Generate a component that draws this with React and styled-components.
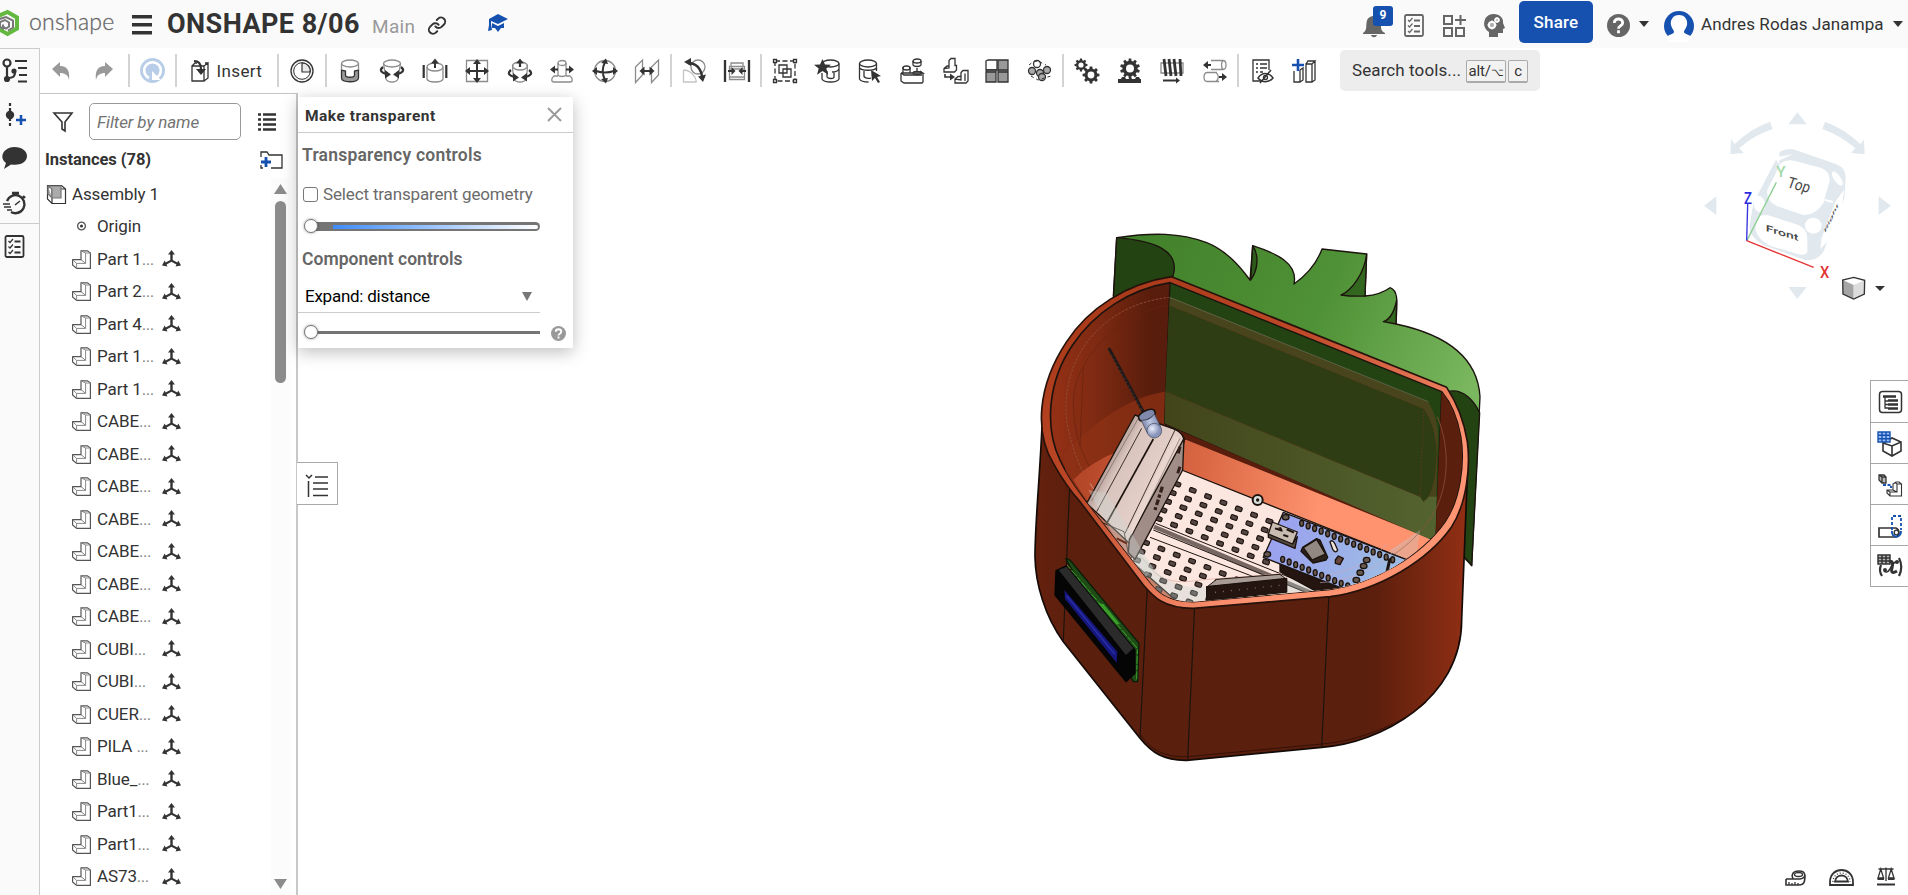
import React from 'react';
import styled, { createGlobalStyle } from 'styled-components';

const INK = '#333';
const BLUE = '#1651b0';

const Global = createGlobalStyle`
  * { box-sizing: border-box; }
  body { margin: 0; background: #fff; color: ${INK}; font: 17px/1 Roboto, "Liberation Sans", sans-serif; overflow: hidden; }
  svg { display: block; flex: none; overflow: visible; }
`;

const Page = styled.div`display: flex; flex-direction: column; width: 1908px; height: 895px;`;
const Header = styled.header`
  display: flex; align-items: center; height: 48px; flex: none; background: #fafafa; overflow: hidden;
`;
const Brand = styled.span`
  width: 103px; margin-left: 9px; padding-bottom: 5px; color: #666;
  font: 300 23px/1 Lato, sans-serif; letter-spacing: 0.25px; -webkit-text-stroke: 0.3px #666;
`;
const DocTitle = styled.h1`
  width: 205px; margin: 0 0 0 15px; white-space: nowrap; font-size: 27px; line-height: 1; font-weight: 700; letter-spacing: 0.45px;
`;
const Branch = styled.span`width: 56px; padding-top: 5px; color: #999; font-size: 19px; letter-spacing: 0.3px;`;
const LearnIcon = styled.div`margin: 0 0 3px 42px;`;
const Spacer = styled.div`flex: 1;`;
const Badge = styled.span`
  position: absolute; left: 10px; top: -9px; width: 20px; height: 20px; border-radius: 3px; background: ${BLUE};
  color: #fff; font-size: 12px; font-weight: 700; line-height: 19px; text-align: center;
`;
const Bell = styled.div`position: relative; width: 22px; height: 22px; margin-top: 4px; margin-right: 19px;`;
const HeadIcon = styled.div`width: ${p => p.$w}px; margin-right: ${p => p.$gap}px; margin-top: 3px;`;
const Share = styled.button`
  width: 74px; height: 42px; margin: 0 14px 4px 0; border: 0; border-radius: 5px; background: ${BLUE}; color: #fff;
  font: 500 17px/1 Roboto, sans-serif; letter-spacing: 0.2px; padding: 0;
`;
const UserName = styled.span`width: 192px; margin-left: 7px; white-space: nowrap; font-size: 17px; letter-spacing: 0.1px;`;
const Caret = styled.span`
  width: 0; height: 0; border: 5px solid transparent; border-top: 6px solid ${p => p.$c || INK}; border-bottom: 0;
  margin-right: ${p => p.$gap || 0}px;
`;

const Body = styled.div`display: flex; flex: 1; min-height: 0;`;
const Rail = styled.nav`
  display: flex; flex-direction: column; width: 40px; flex: none; background: #fafafa;
  border-top: 1px solid #ccc; border-right: 1px solid #ccc;
`;
const RailItem = styled.div`height: ${p => p.$h}px; padding: ${p => p.$pad}; ${p => p.$rule && 'border-bottom: 1px solid #ccc;'}`;
const Main = styled.main`display: flex; flex-direction: column; flex: 1; min-width: 0;`;
const Toolbar = styled.div`display: flex; align-items: center; height: 45px; flex: none;`;
const Tool = styled.div`display: flex; align-items: center; justify-content: center; width: ${p => p.$w || 42.5}px; height: 45px;`;
const Sep = styled.div`width: 2px; height: 33px; margin: 0 1.5px; background: #d3d3d3; flex: none;`;
const InsertTool = styled.div`display: flex; align-items: center; gap: 7px; width: 96.5px; padding: 1px 0 0 12px; font-size: 17px; letter-spacing: 0.35px;`;
const Search = styled.div`
  display: flex; align-items: center; width: 200px; height: 41px; margin: 0 0 0 15px; padding-left: 12px;
  background: #ededed; border-radius: 5px; white-space: nowrap; letter-spacing: 0.1px;
`;
const Key = styled.kbd`
  height: 23px; width: ${p => p.$w}px; margin: 2px 0 0 ${p => p.$ml || 2}px; border: 1px solid #aaa; border-bottom-width: 2px; border-radius: 2px;
  background: #f2f2f2; text-align: center; font: 15px/20px Roboto, "Liberation Sans", sans-serif; letter-spacing: -0.2px;
`;
const OptionGlyph = styled.span`font-size: 11px;`;

const Work = styled.div`display: flex; flex: 1; min-height: 0;`;
const Sidebar = styled.aside`
  width: 258px; flex: none; display: flex; flex-direction: column; border-top: 1px solid #c4c4c4; border-right: 2px solid #c8c8c8;
`;
const FilterRow = styled.div`display: flex; align-items: center; height: 37px; margin-top: 9px; padding-left: 13px;`;
const FilterBox = styled.div`
  width: 152px; height: 37px; margin: 0 17px 0 16px; padding: 0 7px; border: 1px solid #999; border-radius: 5px;
  color: #737373; font: italic 17px/36px Roboto, sans-serif; letter-spacing: -0.1px;
`;
const InstanceRow = styled.div`
  display: flex; align-items: center; justify-content: space-between; height: 38px; padding: 2px 13px 0 5px; font-weight: 700; font-size: 16.5px; letter-spacing: -0.05px;
`;
const TreeArea = styled.div`display: flex; justify-content: space-between; flex: 1; min-height: 0; padding-right: 6px;`;
const Tree = styled.div`flex: 1;`;
const Row = styled.div`
  display: flex; align-items: center; height: 32.5px; padding-left: ${p => p.$in}px; white-space: nowrap; letter-spacing: -0.12px;
`;
const RowName = styled.span`width: ${p => p.$w || 65}px; margin-left: ${p => p.$ml}px;`;
const Dots = styled.span`color: #888; letter-spacing: -0.5px;`;
const ScrollTrack = styled.div`display: flex; flex-direction: column; align-items: center; width: 19px; padding: 6px 0; background: #fcfcfc;`;
const Thumb = styled.div`width: 11px; height: 182px; margin: 7px 0 auto; border-radius: 6px; background: #8b8b8b;`;

const Viewport = styled.section`position: relative; flex: 1;`;
const Float = styled.div`position: absolute; left: ${p => p.$x}px; top: ${p => p.$y}px;`;
const Panel = styled.div`
  position: absolute; left: 0; top: 4px; width: 275px; height: 251px; background: #fff;
  box-shadow: 0 4px 16px rgba(0,0,0,.26);
`;
const PanelHead = styled.div`
  display: flex; align-items: center; justify-content: space-between; height: 36px; padding: 0 12px 0 7px;
  border-bottom: 1px solid #ccc; font-size: 15.5px; font-weight: 700; letter-spacing: 0.5px;
`;
const PanelName = styled.span`padding-top: 5px;`;
const PanelTitle = styled.div`
  height: 22px; padding-left: 4px; margin-top: ${p => p.$mt}px; color: #666; font-weight: 600; font-size: 17.5px; line-height: 22px; letter-spacing: ${p => p.$ls}px;
`;
const CheckRow = styled.label`
  display: flex; align-items: center; height: 22px; margin-top: 17px; padding-left: 5px; gap: 5px; color: #6b6b6b; font-size: 17px; letter-spacing: -0.15px;
`;
const Box = styled.i`width: 15px; height: 15px; border: 1px solid #777; border-radius: 3px;`;
const Slider = styled.div`display: flex; align-items: center; height: 14px; width: 237px; margin: ${p => p.$mt}px 0 0 5px;`;
const Knob = styled.i`
  width: 14px; height: 14px; flex: none; border: 1px solid #777; border-radius: 50%; background: #fff; box-shadow: 0 0 3px rgba(0,0,0,.4);
  margin-left: 1px; z-index: 1;
`;
const FadeTrack = styled.i`
  flex: 1; margin-left: -3px; height: 9px; background: #757575; border-radius: 0 5px 5px 0; display: flex; padding: 3px 2px 2px 18px;
`;
const Fade = styled.i`flex: 1; border-radius: 0 3px 3px 0; background: linear-gradient(90deg, #3f8cf8, #fff);`;
const ThinTrack = styled.i`flex: 1; height: 3px; background: #757575;`;
const Select = styled.div`
  display: flex; align-items: center; justify-content: space-between; width: 242px; height: 33px; margin-top: 10px; padding: 3px 8px 2px 7px;
  border-bottom: 1px solid #ccc; color: #000; letter-spacing: -0.25px;
`;
const HelpRow = styled.div`display: flex; align-items: flex-start; gap: 11px;`;
const Help = styled.span`margin-top: 13px;`;
const FlyTab = styled.div`
  position: absolute; left: -1px; top: 369px; width: 41px; height: 43px; padding: 11px 8px; border: 1px solid #aaa; border-left: 0; background: #fff;
`;
const SideTabs = styled.div`
  position: absolute; right: 0; top: 287px; width: 38px; border: 1px solid #a6a6a6; border-right: 0; background: #fff;
`;
const SideTab = styled.div`height: 41px; padding: 8px 0 0 7px; & + & { border-top: 1px solid #a6a6a6; }`;
const BottomTools = styled.div`position: absolute; right: 13px; bottom: 9px; display: flex; align-items: flex-end; gap: 23px;`;

const Svg = ({ s = 24, w, h, vb, children, ...r }) => (
  <svg width={w || s} height={h || s} viewBox={vb || `0 0 ${w || s} ${h || s}`} fill="none" stroke={INK} strokeWidth="1.3" {...r}>{children}</svg>
);
const G = '#8c8c8c';
const F = { fill: INK, stroke: 'none' };

const gear = (cx, cy, r, n = 8) => {
  const pts = [];
  for (let i = 0; i < n; i++) {
    [[-0.32, 0.76], [-0.2, 1], [0.2, 1], [0.32, 0.76]].forEach(([o, k]) => {
      const a = ((i + o) * 2 * Math.PI) / n;
      pts.push(`${(cx + Math.sin(a) * r * k).toFixed(2)} ${(cy - Math.cos(a) * r * k).toFixed(2)}`);
    });
  }
  const q = r * 0.4;
  return `M${pts.join('L')}ZM${cx - q} ${cy}a${q} ${q} 0 1 0 ${2 * q} 0a${q} ${q} 0 1 0 ${-2 * q} 0Z`;
};
const Gear = p => <path {...F} fillRule="evenodd" d={gear(p.x, p.y, p.r, p.n)} />;

const MateIcons = {
  fastened: <><path fill="#999" stroke={INK} d="M3.5 11v8c0 5 17 5 17 0v-8l-4 1v4c0 3-9 3-9 0v-4z" /><path stroke={G} d="M3.5 4.500v6.500M20.500 4.500v6.500" /><ellipse stroke={G} cx="12" cy="4.500" rx="8.500" ry="3.500" /></>,
  revolute: <><path stroke={G} d="M3.500 4.500 6 20c2 4 10 4 12 0l2.500-15.500" /><ellipse stroke={G} cx="12" cy="4.500" rx="8.500" ry="3.500" /><path strokeWidth="2.200" d="M3 8c-4 3-2 6 4 7M21 8c4 3 2 6-4 7" /><path {...F} d="m11 15.500-6 4V11zM13 15.500l6 4V11z" /></>,
  slider: <><path stroke={G} d="M4 8v12c1 4 15 4 16 0V8" /><ellipse stroke={G} cx="12" cy="8" rx="8" ry="4" /><path strokeWidth="2.200" d="M.7 6v13M23.300 6v13" /><path strokeWidth="2" d="M12 9V4" /><path {...F} d="M12-.5 8 4.500h8z" /></>,
  planar: <><path stroke={G} d="M1.500 1.500h21v21h-21z" /><path strokeWidth="2" d="M12 4v16M4 12h16" /><path {...F} d="m12 0-4 5h8zM12 24l-4-5h8zM0 12l5-4v8zM24 12l-5-4v8z" /></>,
  cylindrical: <><path stroke={G} d="M5 6C4 10 5 15 6 20c2 4 10 4 12 0 1-5 2-10 1-14" /><ellipse stroke={G} cx="12" cy="7" rx="7.500" ry="4" /><path strokeWidth="2.200" d="M3 11c-4 3-2 6 4 7M21 11c4 3 2 6-4 7M12 8V4" /><path {...F} d="m11 18.500-6 4V14zM13 18.500l6 4V14zM12-.5 8 4.500h8z" /></>,
  pinslot: <><ellipse stroke={G} cx="12" cy="4" rx="4" ry="2.500" /><path stroke={G} d="M8 4v12c1 2 7 2 8 0V4M8 17H4c-3 2-3 6 0 6h16c3 0 3-4 0-6h-4" /><path strokeWidth="2" d="M3 10.500h5M16 10.500h5" /><path {...F} d="m0 10.500 5-4v8zM24 10.500l-5-4v8z" /></>,
  ball: <><circle stroke={G} cx="12" cy="12" r="10.500" /><path strokeWidth="2" d="M12 3c-3 6-3 12 0 18M3 12c6 2 12 2 18 0" /><path {...F} d="m13-.5-5 4.500 7 1zM13 24.500l-5-4.500 7-1zM-1 12l5-4v8zM25 12l-5-4v8z" /></>,
  parallel: <><path stroke={G} d="M.5 23.500V8l7-7v15zM16.500 23.500V8l7-7v15z" /><path strokeWidth="2" d="M8 12h8" /><path {...F} d="m4.500 12 5-4.500v9zM19.500 12l-5-4.500v9z" /></>,
  tangent: <><path stroke={G} d="M.5 11v12h13M.5 11c7 0 12 6 13 12" opacity=".5" /><circle stroke={G} cx="15" cy="8" r="7" /><path strokeWidth="2.500" d="M5 4c4 0 7 1 10 4 3 4 4 7 4 10" /><path {...F} d="m1 3 7-4v8zM20 23l-5-5.500 8-2z" /></>,
  width: <><path strokeWidth="2.300" d="M0 1v22M24 1v22" /><path stroke={G} d="M4.500 7.500h15v13h-15zM5 10h14M6 7V4h12v3M5 18h14" /><path strokeWidth="2" d="M3 12h5M21 12h-5" /><path {...F} d="m10.500 12-4-4v8zM13.500 12l4-4v8z" /></>,
};
const ToolIcons = {
  group: <><path strokeDasharray="5 2.500" d="M2 2h20v20H2z" /><path fill="#fff" d="M.5.5h3v3h-3zM20.500.5h3v3h-3zM.5 20.500h3v3h-3zM20.500 20.500h3v3h-3zM10 10h8v8h-8zM6 6h8v8H6z" /></>,
  favmate: <><ellipse cx="15.500" cy="4.500" rx="8.500" ry="3.500" /><path d="M24 4.500V20c-2 4-15 4-17 0v-6M24 10c-1 2-4 3-7 3M12 12v6c1 2 7 2 7 0v-5" /><path {...F} d="m7.500 0 2.500 5.500 6 .2-4.700 3.800 2 6.200L7.500 12 2 15.700l1.700-6.200L-1 5.700l6-.2z" /></>,
  pick: <><ellipse cx="10" cy="4.500" rx="8.500" ry="3.500" /><path d="M1.500 4.500V20c1 2 4 3 9 3M18.500 4.500V12M2 9c1 3 15 3 16 0M6 12v5c0 2 5 3 7 2" /><path {...F} d="m13 11 10 6-4 1 3 5-2 1-3-5-3 3z" /></>,
  replicate: <><path d="M1 14h22l-3-2M1 14v8l3 2h18l1-1v-9M1 14l3 2h18M3 8v6M10 8v6" /><ellipse cx="6.500" cy="9" rx="3.500" ry="2" /><ellipse cx="17" cy="2" rx="4" ry="2" /><path d="M13 2v4c1 2 7 2 8 0V2M17 9v4" /><ellipse cx="17" cy="14" rx="4" ry="1.500" /></>,
  pattern: <><path d="M6 1.500 8-.5h4v7l1.500 0V11l-2 2H1V9.500L4 7h2zM6 1.500V9L1 9.500M18 13.500l2-2h5V22l-2 2H12v-4l3-2.500h3zM18 13.500V21l-6-1M22 14.500V22" /><path d="M2 15v3h5" strokeWidth="1.600" /><path {...F} d="m12 18-5-3.500v7z" /></>,
  linear: <><path fill="#fff" d="m1 2 2-1h9v10H1z" /><path fill="#999" d="M13 1h10v10H13zM1 13h10v10H1zM13 13h10v10H13zM1 13l1-2h9v2M13 13v-2h10v2" /></>,
  circular: <g fill="#aaa"><circle fill="#fff" cx="9" cy="5" r="3.500" /><circle cx="4" cy="12" r="3.500" /><circle cx="12" cy="14" r="3.500" /><circle cx="19" cy="11" r="3.500" /><circle cx="14" cy="18" r="3.500" /><path fill="none" strokeWidth="1" strokeDasharray="3 3" d="M1 6l5-4 6 1 6 3M3 17l7 4 13-4" /></g>,
  gears: <><Gear x={6} y={6} r={6.500} /><Gear x={16} y={16} r={8.500} /></>,
  rack: <><Gear x={12} y={9.500} r={10} n={10} /><path {...F} d="M0 24v-4h3l1-2h3l1 2h3l1-3 2 3h3l1-2h3l1 2h1v4z" /></>,
  screw: <><path stroke={G} d="M1 4h22v10H1z" /><path strokeWidth="2.800" d="M4 0l2 17M9 0l2 17M14 0l2 17M20 0l1 17" /><path strokeWidth="2" d="M3 21.500h14" /><path {...F} d="m20 21.500-4-3v6z" /></>,
  linrel: <><path stroke={G} d="M8 1.500h12c4 0 4 9 0 9H8M20 1.500c-2 2-2 7 0 9M14 13.500H4c-4 0-4 9 0 9h12M13 13.500c3 2 3 7 0 9" /><path strokeWidth="2" d="M4 6h4M16 18h5" /><path {...F} d="m0 6 5-4v8zM24 18l-5-4v8z" /></>,
};

const PartIcon = () => (
  <Svg w={19} h={19} strokeWidth="1.200" stroke="#555">
    <path d="M.6 9.600H9V.8h6.400L18.400 3v15.400H4.600L.6 15z" />
    <path stroke="#888" strokeWidth="1" d="M4.600 18.400v-5L.6 9.600M4.600 13.400h9V3h4.800M13.600 3 9 .8M13.600 13.400 9 9.600" />
  </Svg>
);
const MateMark = () => (
  <Svg w={19} h={18} stroke="none" fill={INK}><path d="M8.300 10V4.500H6L9.500 0 13 4.500h-2.300V10l4.600 2.600 1-2L19 15.500l-5.500 1 1-2-5-2.700-5 2.700 1 2-5.500-1 2.700-4.900 1 2z" /></Svg>
);
const Checklist = ({ c = INK, w = 20, h = 23 }) => (
  <Svg w={w} h={h} vb="0 0 20 23" stroke={c} strokeWidth="1.800"><rect x="1" y="1" width="18" height="21" rx="1.500" /><path strokeWidth="2" d="M10 6.500h6M10 12h6M10 17.500h6" /><path strokeWidth="1.200" d="m4 6 1.500 1.500L8.500 4M4 11.500 5.500 13l3-3.500M4 17l1.500 1.500 3-3.500" /></Svg>
);
const Question = ({ w, h, c }) => (
  <Svg w={w} h={h} vb="0 0 22 22"><circle cx="11" cy="11" r="11" fill={c} stroke="none" /><path stroke="#fff" strokeWidth="2.700" d="M7 8.500c0-5 8-5 8 0 0 3-4 2.500-4 5.500M11 15.500v3" /></Svg>
);

const at = (pts, dx, dy) => pts.map(([x, y]) => `${x + dx},${y + dy}`).join(' ');
const holes = () => {
  const out = [];
  for (let r = 0; r < 5; r++) for (let c = 0; c < (r === 4 ? 8 : 7); c++) out.push([472 + c * 46 - r * 14, 793 + c * 18.500 + r * 26]);
  for (let r = 0; r < 6; r++) for (let c = -1; c < 6; c++) out.push([424 + c * 46 - r * 13.500 + (r > 2 ? 46 : 0), 987 + c * 18.500 + r * 26 + (r > 2 ? 18 : 0)]);
  return out;
};
const INNER = 'M450 188C330 208 225 275 158 375C85 480 72 620 120 720C145 775 175 812 200 845L385 1080C410 1112 440 1145 520 1145L930 1108C1060 1090 1200 1010 1275 905C1320 840 1335 730 1322 650C1312 590 1290 545 1265 515Z';

const Model = () => (
  <svg width="480" height="567" viewBox="0 0 1440 1701" fill="none" stroke="#1c130e" strokeWidth="4" strokeLinejoin="round">
    <defs>
      <linearGradient id="leaf" x1="300" y1="60" x2="1350" y2="520" gradientUnits="userSpaceOnUse"><stop offset="0" stopColor="#41802a" /><stop offset=".55" stopColor="#4f9136" /><stop offset="1" stopColor="#7ab75e" /></linearGradient>
      <linearGradient id="rim" x1="300" y1="200" x2="900" y2="1000" gradientUnits="userSpaceOnUse"><stop offset="0" stopColor="#a93a19" /><stop offset=".45" stopColor="#c04a2a" /><stop offset="1" stopColor="#ff9473" /></linearGradient>
      <linearGradient id="shell" x1="50" y1="0" x2="1345" y2="0" gradientUnits="userSpaceOnUse"><stop offset="0" stopColor="#64210e" /><stop offset=".1" stopColor="#5b1f0d" /><stop offset=".78" stopColor="#5b1f0d" /><stop offset="1" stopColor="#922f14" /></linearGradient>
      <linearGradient id="wall" x1="80" y1="0" x2="450" y2="0" gradientUnits="userSpaceOnUse"><stop offset="0" stopColor="#963116" /><stop offset=".4" stopColor="#7e2a12" /><stop offset=".85" stopColor="#581d0c" /></linearGradient>
      <linearGradient id="floor" x1="200" y1="740" x2="900" y2="860" gradientUnits="userSpaceOnUse"><stop offset="0" stopColor="#b6482a" /><stop offset=".5" stopColor="#db6946" /><stop offset="1" stopColor="#ff936f" /></linearGradient>
      <linearGradient id="low" x1="440" y1="0" x2="1240" y2="0" gradientUnits="userSpaceOnUse"><stop offset="0" stopColor="#42451a" /><stop offset="1" stopColor="#536330" /></linearGradient>
      <linearGradient id="box" x1="280" y1="700" x2="430" y2="780" gradientUnits="userSpaceOnUse"><stop offset="0" stopColor="#b7a29b" /><stop offset=".2" stopColor="#d8c4bd" /><stop offset="1" stopColor="#e6d2cb" /></linearGradient>
      <linearGradient id="pcb" x1="740" y1="900" x2="1100" y2="1050" gradientUnits="userSpaceOnUse"><stop offset="0" stopColor="#9a9ff0" /><stop offset="1" stopColor="#9dbbe4" /></linearGradient>
      <linearGradient id="led" x1="356" y1="0" x2="400" y2="0" gradientUnits="userSpaceOnUse"><stop offset="0" stopColor="#7f89ab" /><stop offset=".5" stopColor="#bcc7e4" /><stop offset="1" stopColor="#8b96ba" /></linearGradient>
      <radialGradient id="dome" cx=".35" cy=".35"><stop offset="0" stopColor="#e9eefc" /><stop offset="1" stopColor="#8994ba" /></radialGradient>
      <clipPath id="inside"><path d={INNER} /></clipPath>
    </defs>
    <path fill="url(#leaf)" d="M290 53C400 37 480 38 560 68C620 92 660 140 690 180L698 77C770 100 835 130 822 192C870 158 892 125 906 87L1040 102L1035 228C1070 225 1095 214 1110 203C1135 212 1132 240 1128 312C1260 340 1372 400 1380 530L1355 1037L1320 1000L600 600L280 228Z" />
    <g fill="#234313">
      <path d="M290 53C400 62 485 90 458 172L280 240Z" />
      <path fill="#2d5b1a" d="M698 77C718 105 714 150 692 180Z" />
      <path fill="#33661f" d="M1040 102C1033 160 995 212 963 225C990 229 1015 229 1035 228Z" />
      <path fill="#33661f" d="M1130 240C1122 280 1105 300 1090 305L1128 312Z" />
      <path d="M1280 516C1330 500 1365 548 1379 578L1355 1037L1325 1000Z" />
    </g>
    <path fill="url(#shell)" stroke="#130b08" strokeWidth="5" d="M68 570C62 750 45 900 45 1010C46 1090 75 1190 130 1265L360 1555C395 1598 430 1622 500 1621L905 1582C1080 1570 1325 1440 1325 1200L1345 690L700 500Z" />
    <path stroke="#2b0f07" strokeWidth="2.500" d="M362 1545C395 1590 430 1612 505 1610L905 1572C1020 1562 1150 1510 1220 1445" />
    <path strokeWidth="3.500" d="M150 770L130 1262M383 1080L360 1555M524 1155L503 1618M927 1120L905 1582" />
    <path fill="url(#rim)" stroke="#25120b" strokeWidth="5" d="M455 170C320 190 205 265 140 365C50 500 45 640 100 730C125 775 150 812 180 845L370 1095C400 1130 430 1165 520 1165L930 1130C1080 1110 1225 1020 1295 920C1340 850 1352 740 1342 665C1330 590 1305 540 1280 502Z" />
    <path fill="url(#wall)" d={INNER} strokeWidth="5" />
    <g clipPath="url(#inside)">
      <path fill="#8e3216" stroke="none" opacity=".7" d="M130 700C230 600 330 530 434 515L434 760L150 860Z" />
      <path stroke="#96523b" strokeWidth="2.500" strokeDasharray="8 4" d="M450 232C260 250 120 400 140 600C160 740 240 850 300 940" />
      <path stroke="#6a2411" strokeWidth="2" d="M450 255C290 280 165 420 160 540C160 680 210 760 290 850" />
      <path stroke="#65220f" strokeWidth="2" d="M190 440L180 680" />
      <path fill="url(#floor)" stroke="none" d="M160 780C260 680 380 670 500 660L1240 960L1330 900L1200 1160L400 1150Z" />
      <path fill="#234313" d="M450 188L1265 515L1248 960L434 610Z" />
      <path fill="#48451c" stroke="none" d="M449 230L1225 545Q1252 590 1254 640L1245 960L434 610Z" />
      <path fill="url(#low)" stroke="none" d="M436 515L1200 830L1250 830L1246 950L1228 957L434 610Z" />
      <path fill="#2e3d14" stroke="none" d="M448 256L1212 566Q1262 640 1246 760Q1238 830 1210 845L1200 830L436 515Z" />
      <path stroke="#69705a" strokeWidth="2" d="M449 232L1225 545" />
      <path stroke="#70391f" strokeWidth="2" strokeDasharray="5 5" d="M436 515L1200 830M450 256L1212 566L1200 830M1212 566Q1262 640 1246 760Q1238 830 1210 845" />
      <path fill="#5a1f0d" stroke="none" d="M1265 515L1340 600L1330 870L1246 960Z" />
      <path stroke="#8b533e" strokeWidth="3" opacity=".8" d="M1252 590C1290 680 1290 800 1235 890C1190 960 1120 1010 1060 1040" />
      <polygon fill="#fce7e0" points={at([[245, 420], [940, 697], [750, 830], [260, 840], [90, 690]], 240, 330)} />
      <path stroke="#776762" strokeWidth="13" d="M402 920L905 1132" /><path strokeWidth="3" d="M407 910L915 1115M400 930L860 1118M390 952L740 1085" />
      <g fill="#574744" strokeWidth="3.500">{holes().map(([x, y], i) => <rect key={i} x={x - 10} y={y - 7} width="20" height="13" rx="4" transform={`rotate(20 ${x} ${y})`} />)}</g>
      <path stroke="#dcae9f" strokeWidth="3" opacity=".7" d="M210 790L320 960L380 1030C420 1090 480 1090 540 1080L950 1048C1040 1040 1120 990 1160 960" />
      <path fill="#b9d1d1" opacity=".3" stroke="none" d="M210 850L390 1030C430 1090 500 1110 560 1098L910 1070C1050 1050 1110 990 1200 930L1180 1080L900 1160L380 1150Z" />
      <polygon fill="#241510" points={at([[540, 702], [770, 795], [700, 812], [540, 725]], 240, 330)} />
      <polygon fill="url(#pcb)" points={at([[550, 547], [935, 695], [870, 740], [735, 778], [490, 682]], 240, 330)} />
      <path stroke="#c9a9c0" strokeWidth="2.500" opacity=".7" d="M890 1068C1000 1060 1070 1010 1100 972M900 1088C1020 1080 1090 1030 1130 984" />
      <g fill="#66594f" strokeWidth="4">
        {Array.from({ length: 15 }, (_, i) => <ellipse key={i} cx={845 + i * 19.500} cy={910 + i * 7.800} rx="6" ry="9" />)}
        {Array.from({ length: 11 }, (_, i) => <ellipse key={i} cx={788 + i * 19.500} cy={1018 + i * 8} rx="6" ry="9" />)}
        {[[1040, 1020], [1031, 1038], [1021, 1058], [1009, 1080], [797, 892], [742, 1003]].map(([x, y]) => <ellipse key={x} cx={x} cy={y} rx="10" ry="8" />)}
        <path fill="#2d211b" d="M843 994L848 982L890 956L900 960L923 1012L918 1020L879 1029Z" />
        <path fill="#918982" d="M850 983L890 958L916 1002L876 1020Z" />
        <path fill="#eee5df" d="M930 966Q937 957 944 970L953 990Q947 1002 938 988Z" />
        <path fill="#66463c" d="M946 1020L955 1008L970 1015L960 1034L946 1030Z" />
        <path fill="#574b45" d="M745 940L818 970L832 950L825 985L745 952Z" />
        <path fill="#c9bdb2" d="M757 906L832 936L818 972L745 942Z" />
        <path strokeWidth="6" d="M765 925L785 932L780 922M790 945L805 950M800 928L822 938" />
      </g>
      <path strokeWidth="9" d="M1110 1015L1100 1060L1080 1070" />
      <path fill="#a99b95" strokeWidth="3" d="M562 1100L590 1078L780 1063L800 1078Z" />
      <path fill="#241510" d="M560 1100L800 1075L800 1116L560 1142Z" />
      <path stroke="#796a62" strokeWidth="4" strokeDasharray="3 21" d="M585 1117L790 1095" />
      <path fill="url(#box)" d="M345 585L465 628Q492 640 492 665L460 780L328 970L200 850Z" />
      <path fill="#a08d87" d="M492 655L488 750L345 1018L325 998L328 958Z" />
      <path strokeWidth="15" stroke="#e9d6ce" d="M472 650L329 940" />
      <path strokeWidth="2.500" d="M465 630L315 940M365 625L230 875M240 905L312 935L320 975L325 1000M345 585L465 628Q492 640 492 665" />
      <path strokeWidth="2" opacity=".5" d="M480 655L330 960M358 590L215 842" />
      <path strokeWidth="5" d="M400 657L260 910" />
      <path stroke="#35211b" strokeWidth="10" strokeDasharray="18 7 10 5" d="M427 800L405 870" /><path stroke="#35211b" strokeWidth="9" d="M480 680L475 700M480 740L473 760" />
      <path fill="#cfd6d4" opacity=".35" stroke="none" d="M205 810L260 820L400 1045L360 1090Z" />
      <path stroke="#6b2d1b" strokeWidth="6" d="M290 955L320 970" />
    </g>
    <path stroke="#211a18" strokeWidth="9" strokeLinecap="round" d="M268 387L370 575" /><path stroke="#594b48" strokeWidth="2" strokeDasharray="5 8" d="M274 405L368 575" />
    <g transform="rotate(-25.700 378 580)">
      <path fill="#7f89ab" strokeWidth="5" d="M352 583a26 11 0 0 1 52 0v6a26 11 0 0 1-52 0z" />
      <path fill="url(#led)" stroke="#3c4256" strokeWidth="2" d="M356 592Q378 606 400 592V636H356Z" />
    </g>
    <circle cx="403" cy="632" r="22" fill="url(#dome)" stroke="#3c4256" strokeWidth="2" />
    <circle cx="713" cy="840" r="15" fill="#d9e0db" strokeWidth="6" /><circle cx="713" cy="840" r="5" fill="#1c130e" stroke="none" />
    <path fill="#1f4b17" stroke="#0b1b08" d="M137 1016L150 1020L357 1270L353 1385L340 1385Z" />
    <path fill="#399d2a" stroke="none" d="M235 1150L250 1152L300 1212L290 1214Z" />
    <path stroke="#3ca52c" strokeWidth="3" strokeDasharray="14 5 24 4" d="M142 1036L352 1285L350 1380" />
    <path fill="#050505" stroke="#050505" d="M108 1052L138 1038L345 1290L345 1360L318 1385L105 1125Z" />
    <path fill="#2b2b2b" stroke="none" d="M116 1050L140 1040L340 1285L318 1305Z" />
    <path fill="#16177c" stroke="none" d="M133 1110L292 1295L290 1328L135 1137Z" /><path stroke="#2b2fa8" d="M140 1128L284 1302" />
  </svg>
);

const ViewCube = () => (
  <svg width="248" height="220" viewBox="0 0 744 660">
    <g fill="#e1e9ef">
      <path d="M412 52L440 88H385ZM412 612L440 576H385ZM132 332L169 304V360ZM693 332L656 304V360Z" />
      <path d="M330 80L338 102Q282 120 238 160L251 174L211 178L213 132L224 147Q270 102 330 80ZM495 80L487 102Q543 122 586 160L573 174L614 178L612 134L601 147Q555 102 495 80Z" />
      <path d="M360 170Q375 160 400 163L530 208Q558 220 557 250L553 310L490 470Q470 500 435 495L310 450Q260 420 270 385L280 325Z" />
    </g>
    <g fill="#fff">
      <path d="M362 205Q380 192 405 198L482 218Q510 228 509 258L490 325Q465 362 430 360L350 333Q318 318 322 285Z" />
      <path d="M300 364Q310 358 325 361L415 390Q442 402 442 430V470Q438 482 415 478L330 452Q285 430 286 390Z" />
      <ellipse cx="298" cy="327" rx="17" ry="25" transform="rotate(-10 298 327)" /><ellipse cx="460" cy="392" rx="25" ry="24" /><ellipse cx="532" cy="251" rx="10" ry="25" transform="rotate(-35 532 251)" />
      <path d="M552 284L526 320L485 428L481 462L512 430L544 350Z" /><path d="M345 188L358 165V185L398 178L358 196V210Z" /><path d="M495 312L520 318L518 324L493 317Z" />
    </g>
    <g fontFamily="Roboto, sans-serif" fill="#444">
      <text transform="translate(379 276) rotate(15) skewX(-5)" fontSize="46" fontWeight="400" textLength="68" lengthAdjust="spacingAndGlyphs">Top</text>
      <text transform="matrix(1 .3 0 .75 317 408)" fontSize="36" fontWeight="500" textLength="98" lengthAdjust="spacingAndGlyphs">Front</text>
      <text transform="matrix(.42 -.88 .14 .5 495 415)" fontSize="25" fontWeight="500" textLength="95" lengthAdjust="spacingAndGlyphs">Right</text>
      <text x="349" y="246" fontSize="46" fontWeight="500" fill="#a5dba8" textLength="27">Y</text>
      <text x="252" y="326" fontSize="48" fontWeight="500" fill="#2b2be0" textLength="24" lengthAdjust="spacingAndGlyphs">Z</text>
      <text x="480" y="549" fontSize="50" fontWeight="500" fill="#e53333" textLength="28" lengthAdjust="spacingAndGlyphs">X</text>
    </g>
    <path stroke="#8fd093" strokeWidth="4" d="M261 436L349 262" /><path stroke="#3333e0" strokeWidth="4" d="M260 437L263 327" /><path stroke="#e53333" strokeWidth="4" d="M260 437L461 517" />
    <path fill="#fff" d="M581 547L614 556L581 570L548 555Z" /><path fill="#a5a5a5" d="M548 555L581 570V612L549 597Z" /><path fill="#ddd" d="M614 556L581 570V612L613 597Z" />
    <path fill="none" stroke="#333" strokeWidth="4" d="M581 547L614 556L613 597L581 612L549 597L548 555Z" />
    <path fill="#333" d="M645 573H675L660 588Z" />
  </svg>
);

const parts = ['Part 1', 'Part 2', 'Part 4', 'Part 1', 'Part 1', 'CABE', 'CABE', 'CABE', 'CABE', 'CABE', 'CABE', 'CABE', 'CUBI', 'CUBI', 'CUER', 'PILA ', 'Blue_', 'Part1', 'Part1', 'AS73'];

const Tools = ({ set, from = 0, to }) => Object.entries(set).slice(from, to).map(([k, d]) => <Tool key={k}><Svg>{d}</Svg></Tool>);

export default function App() {
  return (
    <Page>
      <Global />
      <Header>
        <Svg w={20} h={27} vb="0 0 20 27">
          <path stroke="#63b93f" strokeWidth="4" d="M-4 6 7.500 1 17 6.500v11L7.500 23l-9-5" />
          <path stroke="#777" strokeWidth="2" d="M-2 8.500 6 6l7 3.500v7l-5 3M4 18l-4-2v-5l5-2 4 2.500v4l-3 2-3-2v-2" />
        </Svg>
        <Brand>onshape</Brand>
        <Svg w={20} h={20} stroke="none" fill={INK}><path d="M0 1h20v3.600H0zM0 9h20v3.600H0zM0 17h20v3.600H0z" /></Svg>
        <DocTitle>ONSHAPE 8/06</DocTitle>
        <Branch>Main</Branch>
        <Svg w={18} h={18} vb="1 0 22 22" strokeWidth="2.400" strokeLinecap="round">
          <path d="M10 14a5 5 0 0 0 7.540.54l3-3a5 5 0 0 0-7.070-7.070l-1.720 1.710M14 12a5 5 0 0 0-7.540-.54l-3 3a5 5 0 0 0 7.070 7.070l1.710-1.710" />
        </Svg>
        <LearnIcon><Svg w={20} h={18} stroke="none" fill={BLUE}><path d="M10 0 20 5 10 10 3 7v3l1 6-4 1 1-6V5zM4 9l6 3 6-3v5h-3l-3 4-3-4H4z" /></Svg></LearnIcon>
        <Spacer />
        <Bell>
          <Svg w={22} h={22} stroke="none" fill="#666"><path d="M0 18c4-3 3-5 3.500-10C4 3 7 1 11 1s7 3 7 8 0 7 4 9v1H0zM8 20h6c-1 3-5 3-6 0z" /></Svg>
          <Badge>9</Badge>
        </Bell>
        <HeadIcon $w={20} $gap={19}><Checklist c="#666" /></HeadIcon>
        <HeadIcon $w={23} $gap={18}><Svg w={23} h={22} stroke="#666" strokeWidth="2"><path d="M1 1h8v8H1zM1 13h8v8H1zM13 13h8v8h-8zM12 5h11M17.500 0v10" /></Svg></HeadIcon>
        <HeadIcon $w={21} $gap={14}>
          <Svg w={21} h={23} stroke="none"><path fill="#666" d="M5 23v-5C-2 14-1 4 5 1c8-3 15 2 14 8l2 5-2 1v4h-5v4z" /><circle cx="8" cy="11" r="3" stroke="#fff" strokeWidth="2.200" /><circle cx="13" cy="6" r="1.800" stroke="#fff" strokeWidth="1.800" /><path stroke="#fff" strokeWidth="1.500" d="M8 6v10M3 11h10M13 3v6M10 6h6" opacity=".5" /></Svg>
        </HeadIcon>
        <Share>Share</Share>
        <HeadIcon $w={23} $gap={9}><Question w={23} h={23} c="#666" /></HeadIcon>
        <Caret $gap={15} />
        <Svg w={30} h={30} vb="0 -2 30 30" stroke="none"><circle cx="15" cy="15" r="15" fill={BLUE} /><path fill="#fff" d="M15 4c6 0 9 5 8 10-1 4-3 5-3 7s5 2 7 5l-3 5H6l-3-5c2-3 7-3 7-5s-2-3-3-7c-1-5 2-10 8-10z" /></Svg>
        <UserName>Andres Rodas Janampa</UserName>
        <Caret $gap={5} />
      </Header>
      <Body>
        <Rail>
          <RailItem $h={48} $pad="10px 0 0 2px"><Svg w={25} h={24} strokeWidth="2.200"><circle cx="5" cy="4" r="3.500" /><path d="M5 8v15M5 19c7 0 8-2 8-6M13 2h12M16 9h9M17 16h8M16 22.500h9" /><circle cx="5" cy="20" r="2" fill={INK} /><circle cx="12" cy="12" r="1.500" fill={INK} /></Svg></RailItem>
          <RailItem $h={44} $pad="6px 0 0 5px"><Svg w={22} h={24}><path strokeWidth="2.200" strokeDasharray="3 2" d="M5 0v24" /><circle cx="5" cy="12" r="4.200" {...F} /><path stroke={BLUE} strokeWidth="2.500" d="M16 12v10M11 17h10" /></Svg></RailItem>
          <RailItem $h={44} $pad="6px 0 0 2px"><Svg w={25} h={22} {...F}><path d="M12.500 0C20 0 25 4 25 9s-5 10-16 8.500L2 22l2-6C-4 10 2 0 12.500 0z" /></Svg></RailItem>
          <RailItem $h={39} $pad="7px 0 0 3px" $rule><Svg w={24} h={23} strokeWidth="2.400"><path d="M4 9a9 9 0 1 1 4 11M9 1h7M12.500 1v3M20 4l2 2" /><path strokeWidth="1.600" d="M0 12h7M1 15h7M4 18h5M12 13l5-4" /></Svg></RailItem>
          <RailItem $h={50} $pad="11px 0 0 4px"><Checklist w={21} h={23} /></RailItem>
        </Rail>
        <Main>
          <Toolbar>
            <Tool $w={42}><Svg w={18} h={18} stroke="none" fill="#999"><path d="M0 7 8 0v4c8 0 10 6 9 14-1-5-4-7-9-7v4z" /></Svg></Tool>
            <Tool $w={44.600}><Svg w={18} h={18} stroke="none" fill="#999"><path d="M18 7 10 0v4C2 4 0 10 1 18c1-5 4-7 9-7v4z" /></Svg></Tool>
            <Sep />
            <Tool $w={42}><Svg s={25}><circle cx="12.500" cy="12.500" r="12.500" fill="#b8cde8" stroke="none" /><path stroke="#fff" strokeWidth="2.500" d="M9 20a8.300 8.300 0 1 1 7 0" /><path fill="#fff" stroke="none" d="M12 13v9h9z" /></Svg></Tool>
            <Sep />
            <InsertTool><Svg w={19} h={22}><path d="M1 6h12v15H1zM1 6l3-3h2M13 6l4-3v15l-4 3M14 3h3" /><path strokeWidth="2.200" d="M3 1c5 0 7 3 7 8" /><path {...F} d="m10 15-5-6h10z" /></Svg>Insert</InsertTool>
            <Sep />
            <Tool $w={43.400}><Svg><circle cx="12" cy="12" r="11" fill="#f4f4f4" /><circle cx="12" cy="12" r="8.300" strokeWidth="1" fill="#fff" /><path fill="#e8e8e8" strokeWidth="1.200" d="M12 4v9h8c1-5-3-9-8-9z" /></Svg></Tool>
            <Sep />
            <Tools set={MateIcons} to={8} />
            <Sep />
            <Tools set={MateIcons} from={8} />
            <Sep />
            <Tools set={ToolIcons} to={7} />
            <Sep />
            <Tools set={ToolIcons} from={7} />
            <Sep />
            <Tool $w={43}><Svg><path d="M12 22H3V1h16v10" /><path strokeWidth="1.600" d="M6 5h2M10 5h7M6 9h2M10 9h7M6 13h2M10 13h3" /><path strokeWidth="1.500" d="M8 19c4-6 11-6 15 0-4 5-11 5-15 0zM21 11 10 24" /><circle cx="15.500" cy="18.500" r="2" /></Svg></Tool>
            <Tool $w={41}><Svg><path d="M2 12v11h6V11M8 11l3-2v12l-3 2M14 23V5h6v18zM14 5l2-3h7l-3 3M23 2v19l-3 2" /><path stroke={BLUE} strokeWidth="2.600" d="M6 0v12M0 6h12" /></Svg></Tool>
            <Search>Search tools...<Key $w={40} $ml={5}>alt/<OptionGlyph>⌥</OptionGlyph></Key><Key $w={20}>c</Key></Search>
          </Toolbar>
          <Work>
            <Sidebar>
              <FilterRow>
                <Svg w={20} h={20} strokeWidth="1.600"><path d="M1 1h18l-7 9v9l-3-2v-7z" /></Svg>
                <FilterBox>Filter by name</FilterBox>
                <Svg w={18} h={18} strokeWidth="2.300"><path d="M0 1.500h3M5 1.500h13M0 6.500h3M5 6.500h13M0 11.500h3M5 11.500h13M0 16.500h3M5 16.500h13" /></Svg>
              </FilterRow>
              <InstanceRow>Instances (78)
                <Svg w={23} h={18}><path d="M1 6V1h6l2 3h13v13H11M1 14v3h2" /><path stroke={BLUE} strokeWidth="2.800" d="M6 6v10M1 11h10" /></Svg>
              </InstanceRow>
              <TreeArea>
                <Tree>
                  <Row $in={7}><Svg w={19} h={19} strokeWidth="1.200"><path d="M.5 3V.5h14L18.500 4v14.500H5L.5 14zM5 18V4h13" /><path fill="#aaa" stroke="#777" d="M1 1h13v12H5L1 9zM5 13V4L1 1" /></Svg><RowName $ml={6}>Assembly 1</RowName></Row>
                  <Row $in={37}><Svg w={9} h={9} vb="0 .5 9 9"><circle cx="4.500" cy="4.500" r="3.900" stroke="#555" /><circle cx="4.500" cy="4.500" r="1.500" {...F} /></Svg><RowName $ml={11}>Origin</RowName></Row>
                  {parts.map((p, i) => <Row key={i} $in={32}><PartIcon /><RowName $ml={6}>{p}<Dots>...</Dots></RowName><MateMark /></Row>)}
                </Tree>
                <ScrollTrack>
                  <Svg w={13} h={10} stroke="none" fill="#8b8b8b"><path d="M6.500 0 13 10H0z" /></Svg>
                  <Thumb />
                  <Svg w={13} h={10} stroke="none" fill="#8b8b8b"><path d="M6.500 10 13 0H0z" /></Svg>
                </ScrollTrack>
              </TreeArea>
            </Sidebar>
            <Viewport>
              <Float $x={722} $y={127}><Model /></Float>
              <Float $x={1362} $y={2}><ViewCube /></Float>
              <Panel>
                <PanelHead><PanelName>Make transparent</PanelName><Svg w={13} h={13} stroke="#999" strokeWidth="1.800"><path d="m0 0 13 13M13 0 0 13" /></Svg></PanelHead>
                <PanelTitle $mt={11} $ls={0.22}>Transparency controls</PanelTitle>
                <CheckRow><Box />Select transparent geometry</CheckRow>
                <Slider $mt={14}><Knob /><FadeTrack><Fade /></FadeTrack></Slider>
                <PanelTitle $mt={15} $ls={0.05}>Component controls</PanelTitle>
                <Select>Expand: distance<Svg w={10} h={9} stroke="none" fill="#777"><path d="M0 0h10L5 9z" /></Svg></Select>
                <HelpRow><Slider $mt={12}><Knob /><ThinTrack /></Slider><Help><Question w={15} h={15} c="#999" /></Help></HelpRow>
              </Panel>
              <FlyTab><Svg w={25} h={24} strokeWidth="1.500"><path d="m1 1 3 3 3-3M10 3h13M3.500 7v16M8 9h15M8 15h15M8 21.500h15" /></Svg></FlyTab>
              <SideTabs>
                <SideTab><Svg><rect x="1.500" y="2.500" width="22" height="21" rx="3" strokeWidth="1.500" /><path strokeWidth="2.600" d="M5 7.500h13M10 11.500h10M10 15.500h10M10 19.500h10" /><path d="M7 8v11h3M7 12h3M7 15.500h3" /></Svg></SideTab>
                <SideTab><Svg><path strokeWidth="1.600" d="m5 12 9-5 9 4v9l-9 5-9-5zM5 12l9 3 9-4M14 15v10" /><path fill="#9bc0f4" stroke={BLUE} strokeWidth="1.400" d="M0 1h12v10H0zM0 4.300h12M0 7.700h12M4 1v10M8 1v10" /></Svg></SideTab>
                <SideTab><Svg><path fill="#bbb" d="M1 3h5l2 2v6H4L1 8zM1 3l3 2h4M4 5v6" /><path stroke={BLUE} strokeWidth="2" strokeDasharray="3 1.500" d="M5 13h8v3" /><path strokeWidth="1.100" d="M15 18v-6l3-2h3l2.500 2v12H12l-3-3v-3zM9 18l3 2v4M12 20h7v-8h4.500M15 18l4 2M19 12l-2-1.500" /></Svg></SideTab>
                <SideTab><Svg><path strokeWidth="1.700" d="M1 15h17a5 5 0 0 1 0 9H1z" /><path stroke={BLUE} strokeWidth="1.800" strokeDasharray="3 2" d="M14 17V3h9v14" /><circle cx="18.500" cy="19.500" r="2.300" /><path stroke={BLUE} strokeWidth="2" d="M14 18c-1 7 9 8 9 0" /></Svg></SideTab>
                <SideTab><Svg><path strokeWidth="2.200" d="M3 11c-2 5-1 8 1 11M21 4c3 6 3 12 0 18" /><path fill="#bbb" strokeWidth="1.500" d="M0 1h12v9H0zM0 4h12M0 7h12M4 1v9M8 1v9" /><path strokeWidth="3" d="M11 8c4-2 4 2 3 6s0 6 5 3" /><path strokeWidth="1.600" d="M20 8c-4-1-6 3-8 7-2 3-4 4-6 2" /><circle {...F} cx="19" cy="8" r="2" /><circle {...F} cx="7" cy="16" r="2" /></Svg></SideTab>
              </SideTabs>
              <BottomTools>
                <Svg w={21} h={16}><path strokeWidth="1.600" d="M1 9h14c7-1 6-8-1-8S6 6 8 9M1 9v6h13c5 0 6-3 6-10" /><ellipse cx="13.500" cy="4.500" rx="4" ry="2" /><path d="M4 15v-3M7 15v-2M10 15v-3M13 15v-2" /></Svg>
                <Svg w={25} h={17}><path strokeWidth="1.800" d="M1 16V13C1-3 24-3 24 13v3zM6 12.500c1-8 12-8 13 0z" /><path strokeWidth="1.300" strokeDasharray="1 2" d="M4 13C4 1 21 1 21 13" /></Svg>
                <Svg w={18} h={19}><path strokeWidth="1.300" d="M1.500 2h15M9 .5V14M3.800 2 1 11h5.600zM14.200 2 11.400 11H17z" /><path strokeWidth="2" d="M.5 12h6.500M11 12h6.500M0 17.500h18" /></Svg>
              </BottomTools>
            </Viewport>
          </Work>
        </Main>
      </Body>
    </Page>
  );
}
